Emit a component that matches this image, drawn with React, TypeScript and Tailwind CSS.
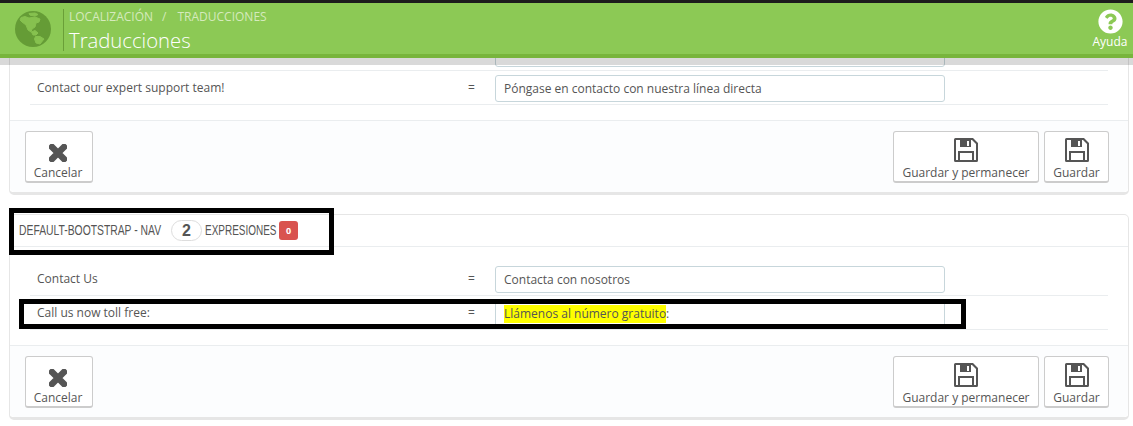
import { FaQuestionCircle } from 'react-icons/fa';

function Row({ label, value, highlight }: { label: string; value: string; highlight?: string }) {
  return (
    <div className="flex h-[34px] items-start border-b border-[#eaedef] pl-[7px]">
      <div className="w-[431px] pt-[7px] text-[12px] leading-[20px]">{label}</div>
      <div className="w-[27px] pt-[7px] text-[12px] leading-[20px]">=</div>
      <div className="mt-[4px] flex h-[27px] w-[450px] items-center rounded-[3px] border border-[#c7d6db] bg-white px-[8px] text-[12px]">
        {highlight && <span className="bg-[#ffff00]">{highlight}</span>}
        {value}
      </div>
    </div>
  );
}

function GlobeIcon() {
  return (
    <svg viewBox="0 0 36 36" className="h-[36px] w-[36px]">
      <circle cx="18" cy="18" r="18" fill="#659c36" />
      <g fill="#86c14f" stroke="#86c14f" strokeWidth="1" strokeLinejoin="round">
        <path d="M14 2.5 20 2l3 1.5-3 1.5-5-.8Z" />
        <path d="M6 6.5 10 5.5l4 1.500 6-1 5 2-1 3-3 1-1 4-3 2-1 3-3-2-2-5-4-3-2-2Z" />
        <path d="M16.500 21 20 19.500l3 2.500-2 2h-3Z" />
        <path d="M20.500 25.500h4.500l4 2.500-4 5-4-1-1.500-4Z" />
      </g>
    </svg>
  );
}

function CancelIcon() {
  return (
    <svg viewBox="0 0 18 18" className="h-[18px] w-[18px]">
      <path d="M3 3 15 15M15 3 3 15" stroke="#555" strokeWidth="6.5" strokeLinecap="round" fill="none" />
    </svg>
  );
}

function SaveIcon() {
  return (
    <svg viewBox="0 0 24 24" className="h-[24px] w-[24px]">
      <path fillRule="evenodd" fill="#555" d="M1.500 0H19l5 5v17.500a1.500 1.500 0 0 1-1.500 1.500h-21A1.500 1.500 0 0 1 0 22.500v-21A1.500 1.500 0 0 1 1.500 0ZM2 2v20h2V13h16v9h2V6l-4-4h-1v7H6V2H2Zm4 13v7h12v-7H6Z" />
      <path fill="#555" d="M6 2h11v7H6z" />
      <path fill="#fff" d="M13 3h2v5h-2z" />
    </svg>
  );
}

function ActionButton({ label, icon, className }: { label: string; icon: 'cancel' | 'save'; className?: string }) {
  return (
    <button className={`flex h-[52px] flex-col items-center rounded-[3px] border border-b-2 border-[#cccccc] bg-white text-[12px] leading-[17px] text-[#555] ${className}`}>
      <span className="flex h-[31px] items-end">{icon === 'cancel' ? <CancelIcon /> : <SaveIcon />}</span>
      <span className="mt-[2px]">{label}</span>
    </button>
  );
}

function PanelFooter() {
  return (
    <div className="flex h-[72px] items-start justify-between rounded-b-[5px] border-t border-[#eaedef] bg-[#fcfdfe] px-[15px] pt-[10px]">
      <ActionButton label="Cancelar" icon="cancel" className="w-[68px] pr-[2px]" />
      <div className="flex gap-[5px] pr-[4px]">
        <ActionButton label="Guardar y permanecer" icon="save" className="w-[146px]" />
        <ActionButton label="Guardar" icon="save" className="w-[65px]" />
      </div>
    </div>
  );
}

export default function App() {
  return (
    <div className="relative h-[426px] w-[1133px] overflow-hidden bg-white font-['Open_Sans',sans-serif] text-[#555]">
      {/* Fixed page head */}
      <header className="absolute inset-x-0 top-0 z-10">
        <div className="h-[3px] bg-[#1c1c1c]" />
        <div className="flex h-[55px] items-start border-b-4 border-[#78b53c] bg-[#8cc955] text-white">
          <div className="flex h-[51px] w-[63px] items-center justify-center pl-[3px]">
            <GlobeIcon />
          </div>
          <div className="mt-[6px] h-[42px] flex-1 border-l border-[#6a9f38] pl-[5px]">
            <div className="flex text-[12px] leading-[16px] text-[#d5eabd]">
              <span>LOCALIZACIÓN</span>
              <span className="ml-[9px] mr-[11px]">/</span>
              <span>TRADUCCIONES</span>
            </div>
            <div className="mt-[4px] text-[20.3px] font-light leading-[22px]">Traducciones</div>
          </div>
          <div className="mr-[5px] flex w-[36px] flex-col items-center pt-[6px]">
            <FaQuestionCircle className="h-[25px] w-[25px]" />
            <span className="mt-[1px] text-[12px] leading-[14px]">Ayuda</span>
          </div>
        </div>
        <div className="h-[7px] bg-black/15" />
      </header>

      <main className="pl-[9px] pr-[4px] pt-[3px]">
        <section className="rounded-[5px] border border-b-[3px] border-[#e6e6e6] bg-white">
          <div className="px-[20px] pb-[15px]">
            <div className="flex h-[66px] pl-[7px]">
              <div className="ml-[458px] mt-[33px] h-[30px] w-[450px] rounded-[3px] border border-[#c7d6db]" />
            </div>
            <div className="border-t border-[#eaedef]">
              <Row label="Contact our expert support team!" value="Póngase en contacto con nuestra línea directa" />
            </div>
          </div>
          <PanelFooter />
        </section>

        <section className="mt-[19px] rounded-[5px] border border-b-[3px] border-[#e6e6e6] bg-white">
          <div className="flex h-[32px] items-center border-b border-[#eaedef] pl-[9px] font-['Liberation_Sans',sans-serif] text-[15px]">
            <span className="w-[142px] origin-left scale-x-[0.69] whitespace-nowrap">DEFAULT-BOOTSTRAP - NAV</span>
            <span className="ml-[10px] flex h-[21px] w-[31px] items-center justify-center rounded-full border border-[#dddddd] text-[16px] font-bold">2</span>
            <span className="ml-[3px] w-[71px] origin-left scale-x-[0.665] whitespace-nowrap">EXPRESIONES</span>
            <span className="ml-[3px] flex h-[19px] w-[19px] items-center justify-center rounded-[3px] bg-[#d9534f] font-['Open_Sans',sans-serif] text-[9px] font-bold text-white">0</span>
          </div>
          <div className="px-[20px] pb-[15px] pt-[15px]">
            <Row label="Contact Us" value="Contacta con nosotros" />
            <Row label="Call us now toll free:" highlight="Llámenos al número gratuito" value=":" />
          </div>
          <PanelFooter />
        </section>
      </main>

      {/* Annotations drawn on top of the screenshot */}
      <div className="absolute left-[9px] top-[208px] h-[47px] w-[325px] border-[5px] border-black" />
      <div className="absolute left-[19px] top-[299px] h-[30px] w-[947px] border-[5px] border-black" />
    </div>
  );
}
